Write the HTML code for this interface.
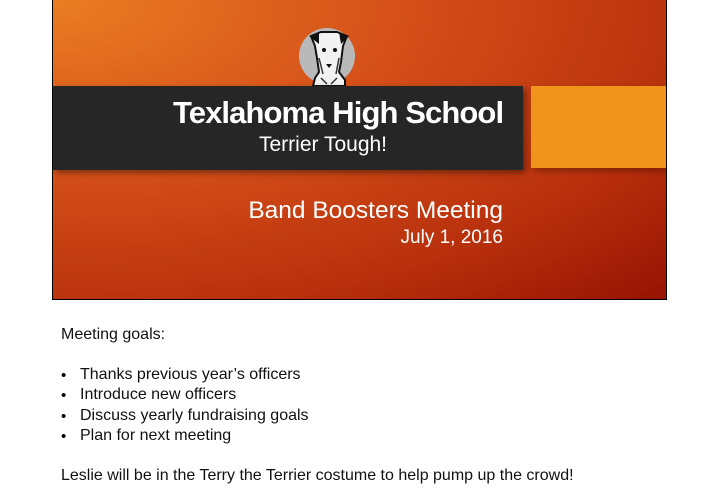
<!DOCTYPE html>
<html><head><style>
body{margin:0;width:713px;height:500px;background:#fff;position:relative;overflow:hidden;font-family:"Liberation Sans",sans-serif}
.slide{position:absolute;left:52px;top:0;width:613px;height:299px;border:1px solid #000;border-top:none;background:radial-gradient(ellipse at 0% 0%,#ea7d22 0%,#d5501a 40%,#b8300c 75%,#8a0800 110%);overflow:hidden}
.bar{position:absolute;left:0;top:86px;width:470px;height:84px;background:#262626;box-shadow:3px 3px 6px rgba(0,0,0,.4)}
.org{position:absolute;left:478px;top:86px;width:136px;height:82px;background:#f1941b;box-shadow:3px 3px 6px rgba(0,0,0,.3)}
.circ{position:absolute;left:246px;top:28px;width:56px;height:56px;border-radius:50%;background:#b9b9b9}
.t{position:absolute;color:#fff;white-space:nowrap}
.txt{position:absolute;left:61px;font-size:16px;color:#111;white-space:nowrap}
.b{position:absolute;left:61px;font-size:15px}
</style></head><body>
<div class="slide">
<div class="circ"></div>
<svg style="position:absolute;left:246px;top:28px" width="60" height="60" viewBox="0 0 60 60">
<path d="M12 8 L22 4 L38 4 L48 8 L44 18 L42 34 L40 44 L46 52 L46 58 L14 58 L16 50 L20 44 L18 30 L16 18 Z" fill="#f2f2f2" stroke="#111" stroke-width="2"/>
<path d="M10 8 L20 4 L20 16 Z M40 4 L50 8 L42 16 Z" fill="#111"/>
<circle cx="25" cy="22" r="2" fill="#111"/><circle cx="36" cy="22" r="2" fill="#111"/>
<path d="M27 36 L33 36 L30 40 Z" fill="#111"/>
<path d="M20 30 L24 46 M40 30 L37 46 M22 50 L28 56 M38 50 L32 56" stroke="#333" stroke-width="1.5"/>
</svg>
<div class="bar"></div>
<div class="org"></div>
<div class="t" style="left:120px;top:95px;font-size:31px;font-weight:bold;letter-spacing:-0.9px">Texlahoma High School</div>
<div class="t" style="left:206px;top:133px;font-size:21px">Terrier Tough!</div>
<div class="t" style="right:163px;top:197px;font-size:24.5px">Band Boosters Meeting</div>
<div class="t" style="right:163px;top:227px;font-size:19px">July 1, 2016</div>
</div>
<div class="txt" style="top:326px">Meeting goals:</div>
<div class="b" style="top:367px">•</div><div class="txt" style="left:80px;top:366px">Thanks previous year’s officers</div>
<div class="b" style="top:387px">•</div><div class="txt" style="left:80px;top:386px">Introduce new officers</div>
<div class="b" style="top:408px">•</div><div class="txt" style="left:80px;top:407px">Discuss yearly fundraising goals</div>
<div class="b" style="top:428px">•</div><div class="txt" style="left:80px;top:427px">Plan for next meeting</div>
<div class="txt" style="top:467px">Leslie will be in the Terry the Terrier costume to help pump up the crowd!</div>
</body></html>
